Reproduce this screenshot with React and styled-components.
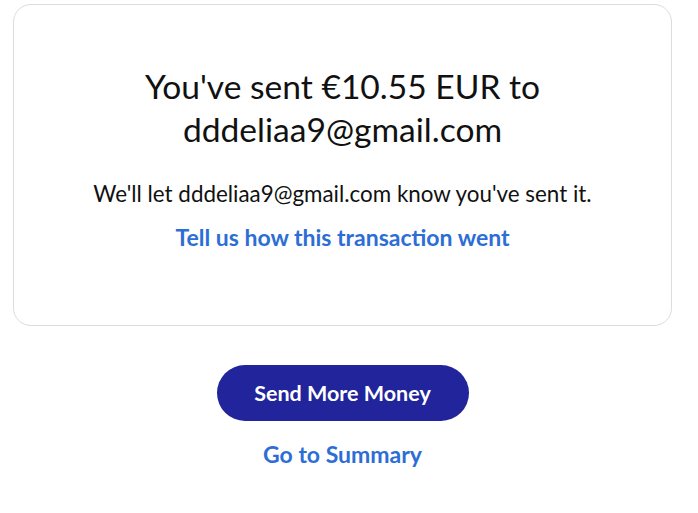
import styled, { createGlobalStyle } from 'styled-components';

const GlobalStyle = createGlobalStyle`
  body {
    margin: 0;
    background: #ffffff;
    font-family: Lato, "Noto Sans", Arial, sans-serif;
    color: #001435;
  }
`;

const Page = styled.div`
  width: 698px;
  padding: 4px 26px 0 13px;
  box-sizing: border-box;
  display: flex;
  flex-direction: column;
  align-items: center;
`;

const Card = styled.section`
  width: 100%;
  height: 322px;
  box-sizing: border-box;
  border: 1px solid #dcdcdc;
  border-radius: 18px;
  display: flex;
  flex-direction: column;
  align-items: center;
  padding-top: 60px;
  text-align: center;
`;

const Heading = styled.h1`
  margin: 0;
  font-size: 33.6px;
  font-weight: 400;
  line-height: 43px;
  color: #111;
`;

const Note = styled.p`
  margin: 29px 0 0;
  font-size: 22.4px;
  line-height: 28px;
  color: #111;
`;

const TextLink = styled.a`
  display: inline-block;
  font-weight: 700;
  font-size: 23px;
  line-height: 28px;
  color: #2c6ed5;
  text-decoration: none;
  margin-top: ${p => p.$top || 0}px;
  cursor: pointer;
`;

const Button = styled.button`
  margin-top: 39px;
  width: 252px;
  height: 56px;
  border: none;
  border-radius: 28px;
  background: #21249a;
  color: #fff;
  font-family: inherit;
  font-weight: 700;
  font-size: 21.5px;
  cursor: pointer;
`;

export default function App() {
  return (
    <>
      <GlobalStyle />
      <Page>
        <Card>
          <Heading>
            You've sent €10.55 EUR to
            <br />
            dddeliaa9@gmail.com
          </Heading>
          <Note>We'll let dddeliaa9@gmail.com know you've sent it.</Note>
          <TextLink $top={15}>Tell us how this transaction went</TextLink>
        </Card>
        <Button>Send More Money</Button>
        <TextLink $top={19}>Go to Summary</TextLink>
      </Page>
    </>
  );
}
